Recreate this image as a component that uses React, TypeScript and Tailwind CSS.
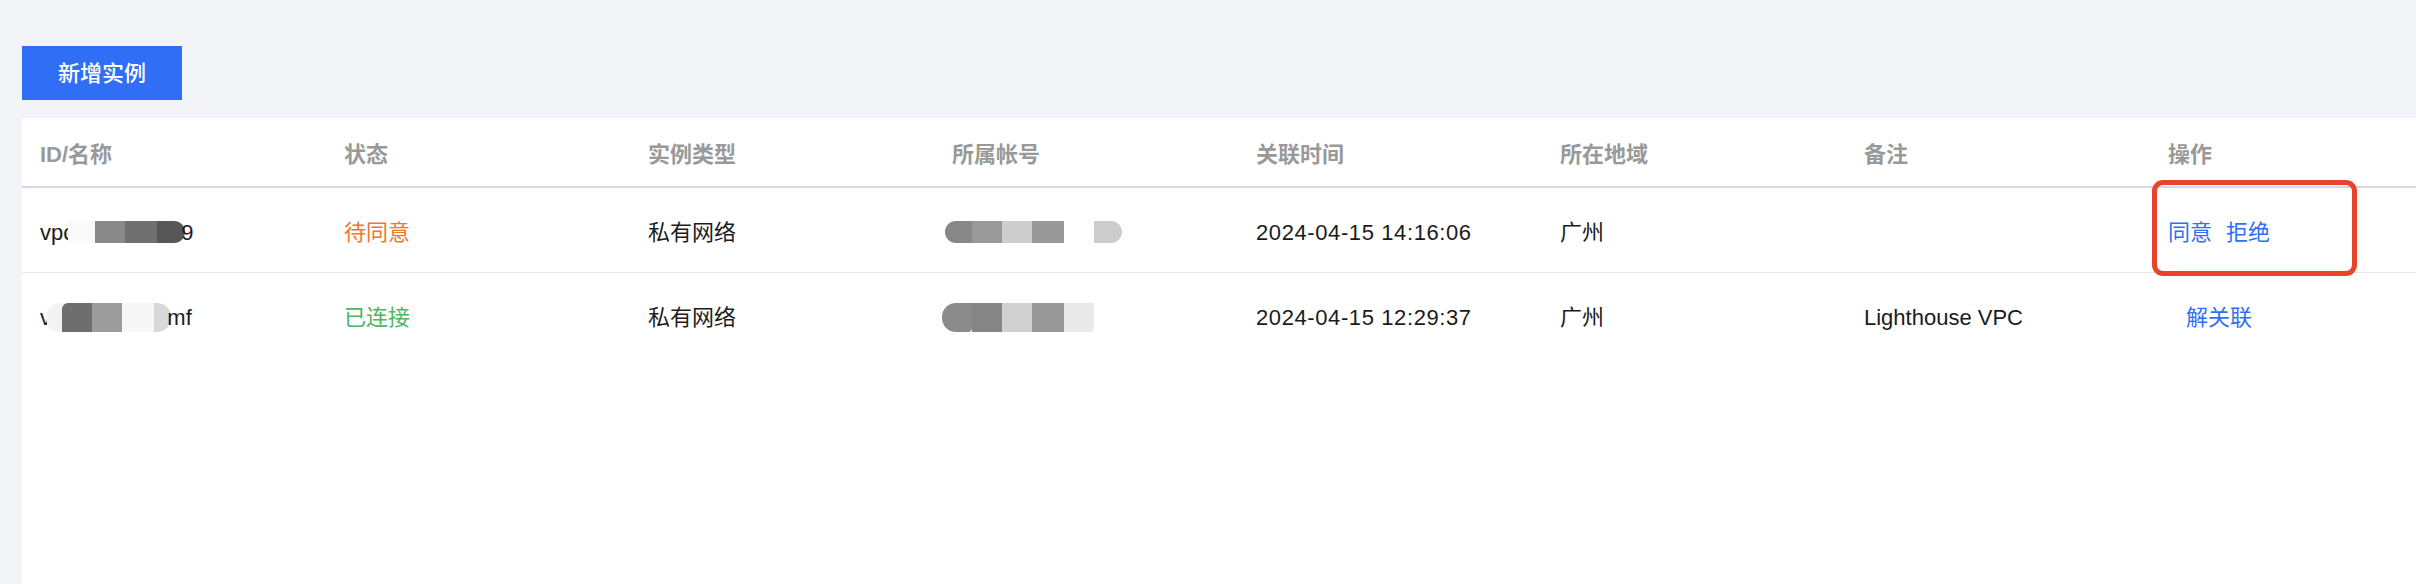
import React from "react";

const font = { fontFamily: '"Liberation Sans", "Noto Sans CJK SC", sans-serif' };

function Blk({ w, c, cls = "" }: { w: number; c: string; cls?: string }) {
  return <span className={`inline-block h-full ${cls}`} style={{ width: w, background: c }} />;
}

export default function App() {
  const headers = ["ID/名称", "状态", "实例类型", "所属帐号", "关联时间", "所在地域", "备注", "操作"];
  return (
    <div className="w-[2416px] h-[584px] bg-[#f3f4f8] flex flex-col pt-[46px] pl-[22px] overflow-hidden text-[22px] text-[#1b1b1b]" style={font}>
      <div>
        <button className="w-[160px] h-[54px] bg-[#316ef6] text-white font-medium text-[22px]">新增实例</button>
      </div>
      <div className="mt-[18px] flex-1 bg-white overflow-hidden">
        <div className="grid grid-cols-[repeat(8,304px)] h-[70px] pt-[5px] items-center border-b-2 border-[#d6d8e0] font-bold text-[#999999]">
          {headers.map((h) => (
            <div key={h} className="pl-[18px]">{h}</div>
          ))}
        </div>
        {/* Row 1 */}
        <div className="grid grid-cols-[repeat(8,304px)] h-[85px] pt-[4px] items-center border-b border-[#e6e6e6]">
          <div className="pl-[18px] flex items-center">
            <span>vpc</span>
            <span className="inline-flex h-[22px] -ml-[6px]">
              <Blk w={27} c="#fafafa" />
              <Blk w={30} c="#898989" />
              <Blk w={32} c="#707070" />
              <Blk w={28} c="#575757" cls="rounded-r-[11px]" />
            </span>
            <span className="-ml-[4px]">9</span>
          </div>
          <div className="pl-[18px] text-[#f0762f]">待同意</div>
          <div className="pl-[18px]">私有网络</div>
          <div className="pl-[18px] flex items-center">
            <span className="inline-flex h-[22px] -ml-[7px]">
              <Blk w={27} c="#878787" cls="rounded-l-[11px]" />
              <Blk w={30} c="#9a9a9a" />
              <Blk w={30} c="#cdcdcd" />
              <Blk w={32} c="#989898" />
              <Blk w={30} c="#ffffff" />
              <Blk w={28} c="#cccccc" cls="rounded-r-[11px]" />
            </span>
          </div>
          <div className="pl-[18px] tracking-[0.6px]">2024-04-15 14:16:06</div>
          <div className="pl-[18px]">广州</div>
          <div className="pl-[18px]"></div>
          <div className="pl-[18px] relative h-full flex items-center text-[#2f6ef5]">
            <span>同意</span>
            <span className="ml-[14px]">拒绝</span>
            <div className="absolute left-[2px] top-[-12px] w-[205px] h-[96px] border-[5px] border-[#e8432b] rounded-[11px]" />
          </div>
        </div>
        {/* Row 2 */}
        <div className="grid grid-cols-[repeat(8,304px)] h-[85px] pt-[4px] items-center">
          <div className="pl-[18px] flex items-center">
            <span>vr</span>
            <span className="inline-flex h-[29px] -ml-[12px]">
              <Blk w={16} c="#f3f3f3" cls="rounded-l-[14px]" />
              <Blk w={30} c="#6e6e6e" cls="rounded-tl-[6px]" />
              <Blk w={30} c="#9d9d9d" />
              <Blk w={32} c="#f7f7f7" />
              <Blk w={17} c="#d9d9d9" cls="rounded-r-[14px]" />
            </span>
            <span className="-ml-[4px]">mf</span>
          </div>
          <div className="pl-[18px] text-[#4cb75c]">已连接</div>
          <div className="pl-[18px]">私有网络</div>
          <div className="pl-[18px] flex items-center">
            <span className="inline-flex h-[29px] -ml-[10px]">
              <Blk w={30} c="#8b8b8b" cls="rounded-l-[14px] rounded-br-[4px]" />
              <Blk w={30} c="#858585" />
              <Blk w={30} c="#d0d0d0" />
              <Blk w={32} c="#999999" />
              <Blk w={30} c="#e9e9e9" cls="rounded-br-[4px]" />
            </span>
          </div>
          <div className="pl-[18px] tracking-[0.6px]">2024-04-15 12:29:37</div>
          <div className="pl-[18px]">广州</div>
          <div className="pl-[18px]">Lighthouse VPC</div>
          <div className="pl-[18px] text-[#2f6ef5]">
            <span className="ml-[18px]">解关联</span>
          </div>
        </div>
      </div>
    </div>
  );
}
